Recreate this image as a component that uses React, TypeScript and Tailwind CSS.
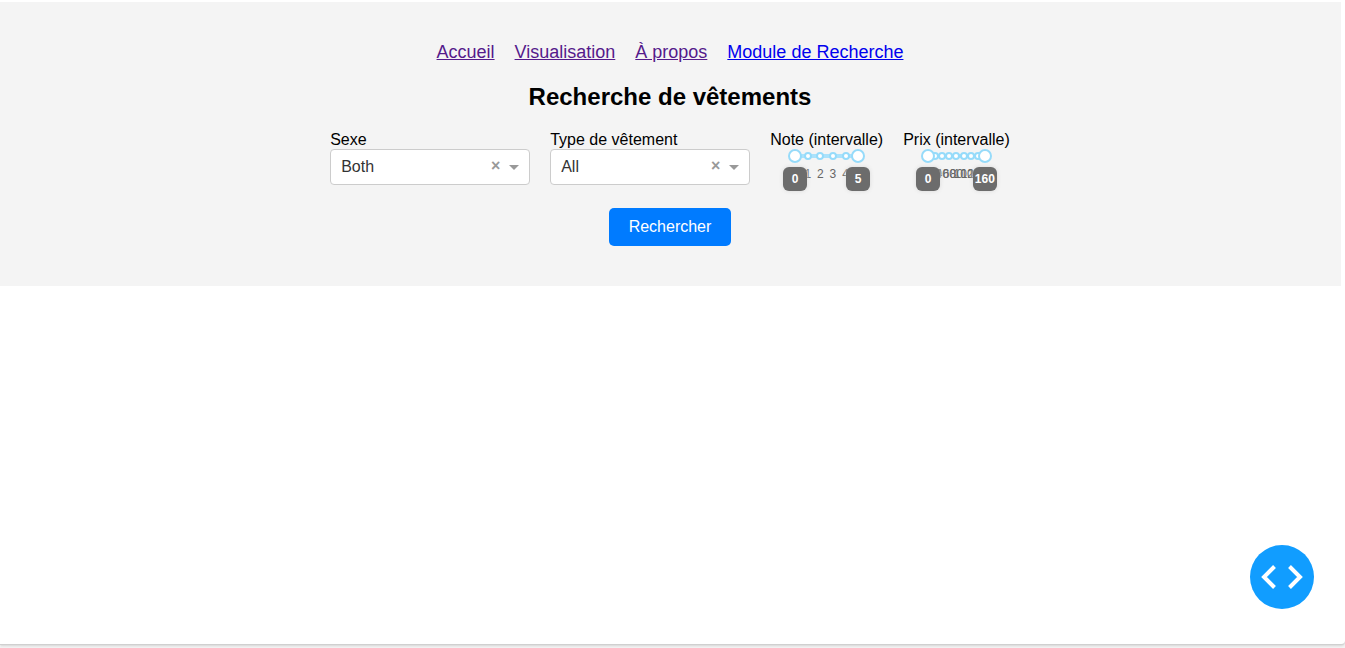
import { useId, useState } from "react";

const links = [
  { label: "Accueil", href: "#accueil", visited: true },
  { label: "Visualisation", href: "#visualisation", visited: true },
  { label: "À propos", href: "#a-propos", visited: true },
  { label: "Module de Recherche", href: "#recherche", visited: false },
];

const thumb =
  "pointer-events-none absolute left-0 top-0 m-0 h-[14px] w-full appearance-none bg-transparent " +
  "[&::-webkit-slider-thumb]:pointer-events-auto [&::-webkit-slider-thumb]:h-[14px] [&::-webkit-slider-thumb]:w-[14px] " +
  "[&::-webkit-slider-thumb]:cursor-grab [&::-webkit-slider-thumb]:appearance-none [&::-webkit-slider-thumb]:rounded-full " +
  "[&::-webkit-slider-thumb]:border-2 [&::-webkit-slider-thumb]:border-solid [&::-webkit-slider-thumb]:border-[#96dbfa] [&::-webkit-slider-thumb]:bg-white";

function Dropdown({ label, options }: { label: string; options: string[] }) {
  const id = useId();
  const [value, setValue] = useState(options[0]);
  return (
    <div className="w-[200px]">
      <label htmlFor={id} className="block">
        {label}
      </label>
      <div className="relative">
        <select
          id={id}
          value={value}
          onChange={(e) => setValue(e.target.value)}
          className="block h-9 w-full appearance-none rounded border border-[#ccc] bg-white pr-12 pl-[10px] text-[#333]"
        >
          <option value="" hidden></option>
          {options.map((o) => (
            <option key={o}>{o}</option>
          ))}
        </select>
        <button
          type="button"
          aria-label="Effacer"
          onClick={() => setValue("")}
          className="absolute top-2 right-[26px] h-[18px] w-[17px] text-center text-[16px] leading-[18px] font-bold text-[#999]"
        >
          ×
        </button>
        <svg viewBox="0 0 10 5" className="pointer-events-none absolute top-4 right-[11px] h-[5px] w-[10px] fill-[#999]">
          <path d="M0 0h10L5 5z" />
        </svg>
      </div>
    </div>
  );
}

function RangeSlider({ label, max, step }: { label: string; max: number; step: number }) {
  const [low, setLow] = useState(0);
  const [high, setHigh] = useState(max);
  const marks = Array.from({ length: max / step + 1 }, (_, i) => i * step);
  const at = (v: number) => ({ left: `${(v / max) * 100}%` });
  return (
    <fieldset>
      <legend>{label}</legend>
      <div className="relative mx-[18px] h-[39px] px-[7px]">
        <div className="relative h-[14px]">
          <div className="absolute inset-x-0 top-[5px] h-1 rounded-md bg-[#e9e9e9]" />
          <div
            className="absolute top-[5px] h-1 bg-[#abe2fb]"
            style={{ left: `${(low / max) * 100}%`, right: `${100 - (high / max) * 100}%` }}
          />
          {marks.map((m) => (
            <span
              key={m}
              style={at(m)}
              className="absolute top-[3px] h-2 w-2 -translate-x-1/2 rounded-full border-2 border-[#96dbfa] bg-white"
            />
          ))}
          {marks.map((m) => (
            <span
              key={m}
              style={at(m)}
              className="absolute top-[18px] -translate-x-1/2 text-[12px] leading-[14px] text-[#666]"
            >
              {m}
            </span>
          ))}
          {[low, high].map((v, i) => (
            <output
              key={i}
              style={at(v)}
              className="absolute top-[18px] z-10 h-6 min-w-6 -translate-x-1/2 rounded-md bg-[#6c6c6c] text-center text-[12px] leading-6 font-bold text-white shadow-[0_0_4px_#d9d9d9]"
            >
              {v}
            </output>
          ))}
        </div>
        <input
          type="range"
          aria-label={`${label} minimum`}
          min={0}
          max={max}
          value={low}
          onChange={(e) => setLow(Math.min(Number(e.target.value), high))}
          className={thumb}
        />
        <input
          type="range"
          aria-label={`${label} maximum`}
          min={0}
          max={max}
          value={high}
          onChange={(e) => setHigh(Math.max(Number(e.target.value), low))}
          className={thumb}
        />
      </div>
    </fieldset>
  );
}

export default function App() {
  return (
    <div className="flex min-h-screen flex-col bg-[#f4f4f4] font-['Liberation_Sans',Arial,sans-serif] text-[16px] leading-[18px] text-black">
      <main className="flex-1 rounded-br border-b border-[#d0d0d0] bg-white pt-[2px] pr-1 shadow-sm">
        <section className="flex flex-col items-center gap-5 bg-[#f4f4f4] py-10 pr-px">
          <nav className="flex gap-5 text-[18px] leading-[21px]">
            {links.map((l) => (
              <a
                key={l.label}
                href={l.href}
                className={l.visited ? "text-[#551a8b] underline" : "text-[#0000ee] underline"}
              >
                {l.label}
              </a>
            ))}
          </nav>
          <h2 className="text-[24px] leading-7 font-bold">Recherche de vêtements</h2>
          <form className="flex flex-col items-center gap-5" onSubmit={(e) => e.preventDefault()}>
            <div className="flex flex-wrap justify-center gap-5">
              <Dropdown label="Sexe" options={["Both", "Men", "Women"]} />
              <Dropdown label="Type de vêtement" options={["All"]} />
              <RangeSlider label="Note (intervalle)" max={5} step={1} />
              <RangeSlider label="Prix (intervalle)" max={160} step={20} />
            </div>
            <button type="submit" className="rounded-[5px] bg-[#007bff] px-5 py-[10px] text-white">
              Rechercher
            </button>
          </form>
        </section>
      </main>
      <div className="h-[3px]" />
      <button
        type="button"
        aria-label="Outils de développement"
        className="fixed right-[31px] bottom-[39px] flex size-16 items-center justify-center rounded-full bg-[#119dff]"
      >
        <svg viewBox="0 0 42 24" className="h-6 w-[42px] fill-none stroke-white stroke-[4]">
          <path d="M13.5 1.5 3 12l10.5 10.5M28.500 1.500 39 12 28.500 22.500" />
        </svg>
      </button>
    </div>
  );
}
